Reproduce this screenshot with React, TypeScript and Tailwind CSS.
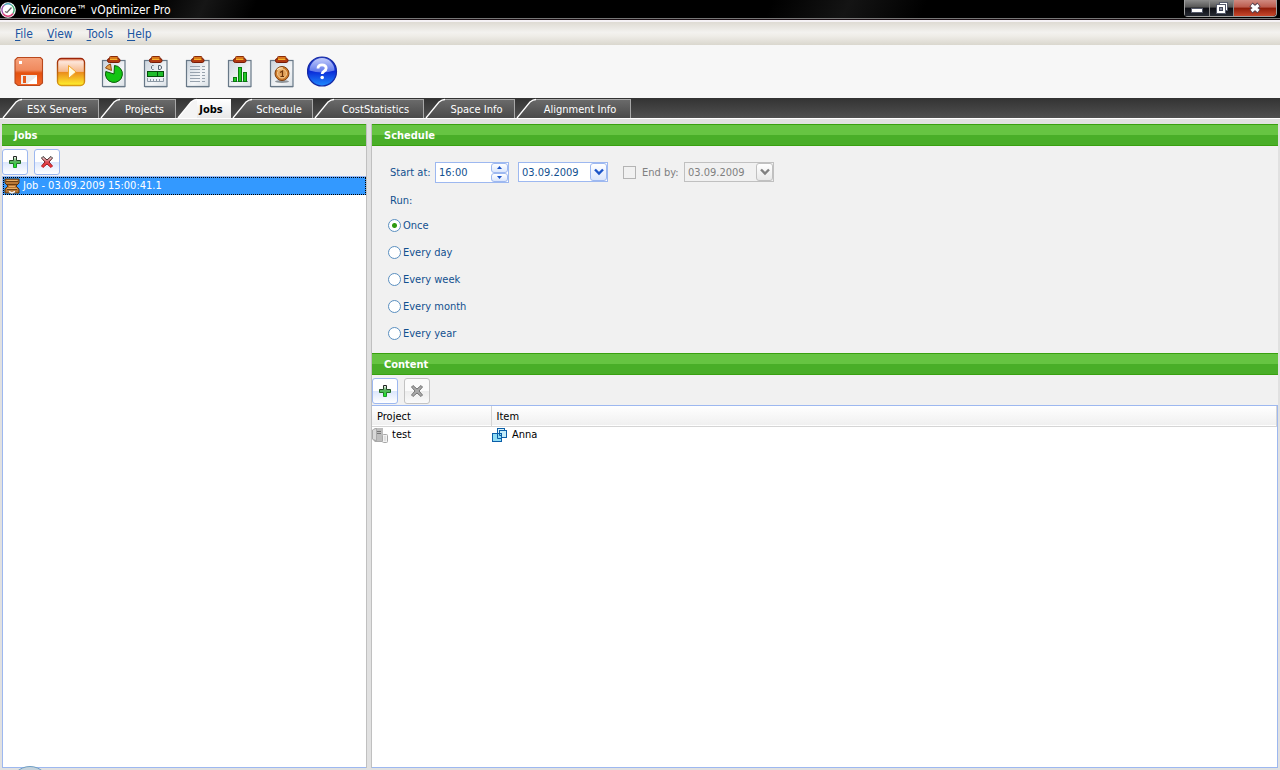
import { useState, type ReactNode } from 'react';
import { clsx } from 'clsx';

const menus = ['File', 'View', 'Tools', 'Help'];

const tabs = [
  { name: 'ESX Servers', width: 'w-[98px]' },
  { name: 'Projects', width: 'w-[77px]' },
  { name: 'Jobs', width: 'w-[55px]' },
  { name: 'Schedule', width: 'w-[82px]' },
  { name: 'CostStatistics', width: 'w-[111px]' },
  { name: 'Space Info', width: 'w-[91px]' },
  { name: 'Alignment Info', width: 'w-[116px]' },
];

const intervals = ['Once', 'Every day', 'Every week', 'Every month', 'Every year'];

function AppLogo() {
  return (
    <svg width="16" height="16" viewBox="0 0 16 16" aria-hidden="true">
      <circle cx="8" cy="8" r="7.8" fill="#fff" />
      <path d="M3 11.5A6 6 0 0 1 4.5 3" fill="none" stroke="#9a4fa8" strokeWidth="1.4" />
      <path d="M4.5 3A6 6 0 0 1 11.5 3" fill="none" stroke="#4aa3b5" strokeWidth="1.4" />
      <path d="M11.5 3A6 6 0 0 1 13 11.5" fill="none" stroke="#3fae74" strokeWidth="1.4" />
      <path d="M3 11.5A6 6 0 0 0 13 11.5" fill="none" stroke="#d8467c" strokeWidth="1.4" />
      <path d="M5 9.5 7 10.5 11.5 5.5" fill="none" stroke="#666" strokeWidth="1.3" />
    </svg>
  );
}

function SaveIcon() {
  return (
    <svg width="32" height="32" viewBox="0 0 32 32" aria-hidden="true">
      <defs>
        <linearGradient id="save" x1="0" y1="0" x2="0" y2="1">
          <stop offset="0" stopColor="#f6a27c" />
          <stop offset="0.45" stopColor="#f08a5e" />
          <stop offset="0.55" stopColor="#e4520f" />
          <stop offset="1" stopColor="#f2662a" />
        </linearGradient>
      </defs>
      <path d="M4.500 1.500H27.500L29.500 3.500V27L26.500 29.500H5L2 27V4Z" fill="url(#save)" stroke="#b9481c" strokeWidth="1.1" />
      <rect x="6" y="5" width="3" height="3" fill="#fff" />
      <rect x="8" y="19" width="16" height="9" fill="#eceae8" />
      <rect x="10" y="20" width="3" height="7" fill="#e65a1a" />
      <path d="M14 28 24 20V28Z" fill="#fff" />
    </svg>
  );
}

function RunIcon() {
  return (
    <svg width="32" height="32" viewBox="0 0 32 32" aria-hidden="true">
      <defs>
        <linearGradient id="run" x1="0" y1="0" x2="0" y2="1">
          <stop offset="0" stopColor="#e9825a" />
          <stop offset="0.12" stopColor="#fde6da" />
          <stop offset="0.48" stopColor="#f6b98c" />
          <stop offset="0.5" stopColor="#ea8a1c" />
          <stop offset="1" stopColor="#fff12c" />
        </linearGradient>
        <linearGradient id="runEdge" x1="0" y1="0" x2="0" y2="1">
          <stop offset="0" stopColor="#9c2408" />
          <stop offset="1" stopColor="#d99a12" />
        </linearGradient>
      </defs>
      <rect x="2.5" y="2.5" width="27" height="27" rx="4" fill="url(#run)" stroke="url(#runEdge)" strokeWidth="1.4" />
      <path d="M13.500 9.500 21 16 13.500 22.500Z" fill="#fffbe2" stroke="#f0a52a" strokeWidth="1" />
    </svg>
  );
}

function Clipboard({ children }: { children: ReactNode }) {
  return (
    <svg width="32" height="32" viewBox="0 0 32 32" aria-hidden="true">
      <defs>
        <linearGradient id="paper" x1="0" y1="0" x2="1" y2="1">
          <stop offset="0" stopColor="#cbd4dd" />
          <stop offset="0.6" stopColor="#f3f5f7" />
          <stop offset="1" stopColor="#dbe1e6" />
        </linearGradient>
      </defs>
      <rect x="5.5" y="4.5" width="22.5" height="26" fill="url(#paper)" stroke="#687887" strokeWidth="1.2" />
      <path d="M6 31.5H28" stroke="#c6ccd1" />
      <rect x="10.500" y="2.500" width="12.500" height="4" rx="1.800" fill="#b23a12" stroke="#771b07" />
      <rect x="12.500" y="0.500" width="8.500" height="3" rx="1" fill="#d9791a" stroke="#8a2a0a" />
      <path d="M13 3.500H20.500" stroke="#f5b32c" />
      {children}
    </svg>
  );
}

function PieReport() {
  return (
    <Clipboard>
      <path d="M17 18 17.500 9.500A8.500 8.500 0 1 1 8.800 15.500Z" fill="#14c514" stroke="#075c07" />
      <path d="M14.500 14.500 8.500 12A8 8 0 0 1 13.500 8Z" fill="#e5a149" stroke="#8f4d13" />
    </Clipboard>
  );
}

function DiskReport() {
  return (
    <Clipboard>
      <path d="M14.500 9.500H13.500L12.500 10.500V12.500L13.500 13.500H14.500M19.500 9.500V13.500H21L22.500 12.500V10.500L21 9.500Z" fill="none" stroke="#566473" />
      <rect x="8.500" y="15.500" width="16" height="5" fill="#1fbd2a" stroke="#064e0b" />
      <path d="M18.500 15V21" stroke="#064e0b" />
      <path d="M8.500 22V25.500H24.500V22M11.500 23V25M14.500 23V25M17.500 23V25M20.500 23V25" fill="none" stroke="#8b98a4" />
    </Clipboard>
  );
}

function ListReport() {
  return (
    <Clipboard>
      <path
        d="M9 10.500H19M9 13.500H19M9 16.500H19M9 19.500H19M9 22.500H19M9 25.500H19M21 10.500H24M21 13.500H24M21 16.500H24M21 19.500H24M21 22.500H24M21 25.500H24"
        stroke="#97a2ad"
      />
    </Clipboard>
  );
}

function ChartReport() {
  return (
    <Clipboard>
      <path d="M8 25.500H25" stroke="#7d8b98" />
      <rect x="10.500" y="21.500" width="3" height="4" fill="#20c925" stroke="#087a0d" />
      <rect x="15.500" y="11.500" width="3" height="14" fill="#20c925" stroke="#087a0d" />
      <rect x="20.500" y="16.500" width="3" height="9" fill="#20c925" stroke="#087a0d" />
    </Clipboard>
  );
}

function CostReport() {
  return (
    <Clipboard>
      <ellipse cx="17" cy="25.500" rx="7" ry="1.500" fill="#8e959b" />
      <circle cx="17" cy="17.500" r="7" fill="#cd7c2d" stroke="#7c3e0e" />
      <circle cx="17" cy="17.500" r="4.500" fill="#e3a25a" stroke="#f5cf96" />
      <path d="M15 16.500 17.500 15V20.500M15.500 20.500H19" fill="none" stroke="#6d3409" strokeWidth="1.200" />
      <path d="M12 14A6 6 0 0 1 18 12" fill="none" stroke="#ffe5b8" strokeWidth="1.200" />
    </Clipboard>
  );
}

function HelpIcon() {
  return (
    <svg width="32" height="32" viewBox="0 0 32 32" aria-hidden="true">
      <defs>
        <linearGradient id="help" x1="0" y1="0" x2="0" y2="1">
          <stop offset="0" stopColor="#2b46c8" />
          <stop offset="0.5" stopColor="#0a2bd8" />
          <stop offset="1" stopColor="#1f8cff" />
        </linearGradient>
        <linearGradient id="helpGloss" x1="0" y1="0" x2="0" y2="1">
          <stop offset="0" stopColor="#c3cdfb" />
          <stop offset="1" stopColor="#5a73ea" />
        </linearGradient>
      </defs>
      <circle cx="15" cy="15.500" r="14.500" fill="url(#help)" stroke="#1529a4" strokeWidth="1.200" />
      <path d="M2.500 14.500A12.500 12.500 0 0 1 27.500 14.500Q15 18.500 2.500 14.500Z" fill="url(#helpGloss)" />
      <path d="M11 12.500Q11 8.800 15 8.800T19.200 12Q19.200 14 17 15.200Q15.200 16.200 15.200 18" fill="none" stroke="#fff" strokeWidth="2.800" />
      <circle cx="15.200" cy="21.500" r="1.800" fill="#fff" />
    </svg>
  );
}

const tools = [
  { label: 'Save', icon: <SaveIcon /> },
  { label: 'Run', icon: <RunIcon /> },
  { label: 'Usage report', icon: <PieReport /> },
  { label: 'Disk report', icon: <DiskReport /> },
  { label: 'List report', icon: <ListReport /> },
  { label: 'Chart report', icon: <ChartReport /> },
  { label: 'Cost report', icon: <CostReport /> },
  { label: 'Help', icon: <HelpIcon /> },
];

function AddIcon() {
  return (
    <svg width="14" height="14" viewBox="0 0 14 14" aria-hidden="true">
      <defs>
        <linearGradient id="add" x1="0" y1="0" x2="0" y2="1">
          <stop offset="0" stopColor="#fff" />
          <stop offset="0.4" stopColor="#5fae66" />
          <stop offset="1" stopColor="#10f520" />
        </linearGradient>
        <linearGradient id="addEdge" x1="0" y1="0" x2="0" y2="1">
          <stop offset="0" stopColor="#222" />
          <stop offset="1" stopColor="#1f9c2a" />
        </linearGradient>
      </defs>
      <path d="M5.500 1.500H8.500V5.500H12.500V8.500H8.500V12.500H5.500V8.500H1.500V5.500H5.500Z" fill="url(#add)" stroke="url(#addEdge)" />
    </svg>
  );
}

function RemoveIcon({ disabled }: { disabled?: boolean }) {
  return (
    <svg width="14" height="14" viewBox="0 0 14 14" aria-hidden="true">
      <defs>
        <linearGradient id="remove" x1="0" y1="0" x2="0" y2="1">
          <stop offset="0" stopColor="#fff" />
          <stop offset="0.5" stopColor="#d94a55" />
          <stop offset="1" stopColor="#ff2a2a" />
        </linearGradient>
        <linearGradient id="removeEdge" x1="0" y1="0" x2="0" y2="1">
          <stop offset="0" stopColor="#222" />
          <stop offset="1" stopColor="#c01822" />
        </linearGradient>
      </defs>
      <path
        d="M3 1.500 7 5 11 1.500 12.500 3 9 7 12.500 11 11 12.500 7 9 3 12.500 1.500 11 5 7 1.500 3Z"
        fill={disabled ? '#a9a9a9' : 'url(#remove)'}
        stroke={disabled ? '#737373' : 'url(#removeEdge)'}
      />
    </svg>
  );
}

function JobIcon() {
  return (
    <svg width="16" height="16" viewBox="0 0 16 16" aria-hidden="true">
      <path d="M1 1H15V5L12 8 15 11V15H1V11L4 8 1 5Z" fill="#b87735" stroke="#5c3208" />
      <path d="M2 3.500H14M3 6.500H13M3 11.500H13" stroke="#6b3d10" />
      <path d="M2.500 2.500H13.500M5 8.500H11M3 10.500H13" stroke="#e6ac62" />
      <path d="M5 13.500 8 15 11 13.500" fill="none" stroke="#f4f4f4" strokeWidth="1.400" />
    </svg>
  );
}

function ServerIcon() {
  return (
    <svg width="16" height="16" viewBox="0 0 16 16" aria-hidden="true">
      <path d="M3 1H10V15H3L0 12V3Z" fill="#a9a9a9" />
      <path d="M1 3 4 2V13L1 12Z" fill="#d8d8d8" />
      <rect x="5" y="1" width="6" height="13" fill="#bdbdbd" />
      <path d="M5 4.500H9M5 6.500H9" stroke="#777" />
      <rect x="10.500" y="7.500" width="5" height="8" rx="1" fill="#f2f2f2" stroke="#a8a8a8" />
      <path d="M13 9V14" stroke="#cfcfcf" />
    </svg>
  );
}

function ItemIcon() {
  return (
    <svg width="16" height="16" viewBox="0 0 16 16" aria-hidden="true">
      <rect x="5.500" y="1.500" width="7" height="7" fill="#d8f3fb" stroke="#0b5ea8" />
      <rect x="7.500" y="3.500" width="7" height="7" fill="#c3ecf9" stroke="#0b5ea8" />
      <rect x="0.500" y="6.500" width="9" height="8" fill="#8fdcf4" stroke="#0b5ea8" />
      <path d="M5.500 6V11.500H9.500M7.500 6V8.500H9.500" fill="none" stroke="#0b5ea8" />
    </svg>
  );
}

function Chevron() {
  return (
    <svg width="10" height="8" viewBox="0 0 10 8" aria-hidden="true">
      <path d="M1 1.500 5 5.500 9 1.500" fill="none" stroke="currentColor" strokeWidth="2.400" />
    </svg>
  );
}

function Tab({ name, width, active, onSelect }: { name: string; width: string; active: boolean; onSelect: () => void }) {
  return (
    <button
      type="button"
      role="tab"
      aria-selected={active}
      onClick={onSelect}
      className={clsx('flex h-5 pr-px', width, active ? 'font-bold text-black' : 'text-white')}
    >
      <svg width="20" height="20" viewBox="0 0 20 20" className="shrink-0" aria-hidden="true">
        <defs>
          <linearGradient id="slope" x1="0" y1="0" x2="0" y2="1">
            <stop offset="0" stopColor="#6a6a6a" />
            <stop offset="1" stopColor="#4a4a4a" />
          </linearGradient>
        </defs>
        <path d="M1 20 14 4Q17 1 20 1V20Z" fill={active ? '#f4f4f4' : 'url(#slope)'} />
        <path d="M1 20 14 4Q17 1.500 20 1.500" fill="none" stroke="#fff" strokeWidth="1.300" />
      </svg>
      <span
        className={clsx(
          'mt-px h-[19px] flex-1 border-t pr-1.5 text-center leading-5 whitespace-nowrap',
          active
            ? 'border-white bg-linear-to-b from-white to-[#e8e8e8]'
            : 'border-r border-[#a8a8a8] bg-linear-to-b from-[#6a6a6a] to-[#4a4a4a]',
        )}
      >
        {name}
      </span>
    </button>
  );
}

function PanelTitle({ children }: { children: ReactNode }) {
  return (
    <h2 className="h-[22px] shrink-0 border-y border-[#39a010] bg-[linear-gradient(#66c442_50%,#49ae28_50%)] px-3 leading-[22px] font-bold text-white">
      {children}
    </h2>
  );
}

function ToolButton({ label, disabled, children }: { label: string; disabled?: boolean; children: ReactNode }) {
  return (
    <button
      type="button"
      aria-label={label}
      disabled={disabled}
      className={clsx(
        'grid size-[26px] place-items-center rounded-[3px] border',
        disabled
          ? 'border-[#c3c3c3] bg-[linear-gradient(#fbfbfb_50%,#ececec_50%,#fafafa)]'
          : 'border-[#9db8f0] bg-[linear-gradient(#fff_50%,#dbe6fc_50%,#fff)]',
      )}
    >
      {children}
    </button>
  );
}

function DateSelect({ id, label, disabled }: { id: string; label: string; disabled?: boolean }) {
  return (
    <div
      className={clsx(
        'relative flex h-5 w-[90px] border',
        disabled ? 'border-[#c0c0c0] text-[#808080]' : 'border-[#9db8f0] bg-white text-[#12508f]',
      )}
    >
      <select id={id} aria-label={label} disabled={disabled} className="w-full appearance-none pt-px pl-[3px] opacity-100 outline-none">
        <option>03.09.2009</option>
      </select>
      <span
        className={clsx(
          'pointer-events-none absolute inset-y-0 right-0 grid w-[17px] place-items-center rounded-[3px] border',
          disabled
            ? 'border-[#c0c0c0] bg-linear-to-b from-white to-[#e8e8e8]'
            : 'border-[#9db8f0] bg-linear-to-b from-white to-[#dbe6fc] text-[#1c55c8]',
        )}
      >
        <Chevron />
      </span>
    </div>
  );
}

function StepButton({ label, path }: { label: string; path: string }) {
  return (
    <button
      type="button"
      aria-label={label}
      className="grid flex-1 place-items-center rounded-[3px] border border-[#9db8f0] bg-linear-to-b from-white to-[#dbe6fc]"
    >
      <svg width="5" height="3" viewBox="0 0 5 3" aria-hidden="true">
        <path d={path} fill="#1c55c8" />
      </svg>
    </button>
  );
}

function TitleBar() {
  return (
    <header className="flex h-5 justify-between border-b border-[#1b1015] bg-black bg-[linear-gradient(115deg,#000_12%,#161616_16%,#000_20%,#000_60%,#141414_66%,#000_72%)] text-xs text-white shadow-[inset_0_-1px_#777]">
      <div className="flex items-center gap-[5px]">
        <AppLogo />
        <h1>Vizioncore™ vOptimizer Pro</h1>
      </div>
      <div className="mr-[3px] flex h-[17px] rounded-b-[4px] border border-t-0 border-[#a0a0a0]">
        <button type="button" aria-label="Minimize" className="grid w-[25px] place-items-center border-r border-[#8a8a8a] bg-[linear-gradient(#8b8b8b,#555_45%,#0b0c12_50%,#262a33)]">
          <svg width="12" height="14" viewBox="0 0 12 14" aria-hidden="true">
            <rect x="0.500" y="7.500" width="11" height="4" fill="#fff" stroke="#555a6b" />
          </svg>
        </button>
        <button type="button" aria-label="Restore" className="grid w-6 place-items-center border-r border-[#8a8a8a] bg-[linear-gradient(#8b8b8b,#555_45%,#0b0c12_50%,#262a33)]">
          <svg width="12" height="14" viewBox="0 0 12 14" aria-hidden="true">
            <rect x="3.500" y="1.500" width="8" height="8" fill="#fff" stroke="#555a6b" />
            <rect x="0.500" y="3.500" width="9" height="9" fill="#fff" stroke="#555a6b" />
            <rect x="3.500" y="6.500" width="3" height="3" fill="#8b8fa0" stroke="#454a5b" />
          </svg>
        </button>
        <button type="button" aria-label="Close" className="grid w-[42px] place-items-center rounded-br-[3px] bg-[linear-gradient(#d08a80,#bb5a4c_45%,#8e1b08_50%,#c8482c)]">
          <svg width="12" height="14" viewBox="0 0 12 14" aria-hidden="true">
            <path d="M2 3.500 10 10.500M10 3.500 2 10.500" stroke="#5a4350" strokeWidth="5" />
            <path d="M2.500 4 9.500 10M9.500 4 2.500 10" stroke="#fff" strokeWidth="3" />
          </svg>
        </button>
      </div>
    </header>
  );
}

function JobsPanel() {
  return (
    <section className="flex w-[365px] shrink-0 flex-col border-r border-[#c0c0c0] bg-[#f1f1f1]">
      <PanelTitle>Jobs</PanelTitle>
      <div className="flex gap-1.5 pt-[3px] pb-px">
        <ToolButton label="Add job"><AddIcon /></ToolButton>
        <ToolButton label="Remove job"><RemoveIcon /></ToolButton>
      </div>
      <ul className="flex-1 border border-r-0 border-[#9db8f0] bg-white">
        <li className="flex h-[18px] items-center gap-[3px] border border-dotted border-black bg-[#3399ff] leading-[18px] text-white">
          <JobIcon />
          Job - 03.09.2009 15:00:41.1
        </li>
      </ul>
    </section>
  );
}

function ScheduleForm() {
  const [run, setRun] = useState('Once');

  return (
    <form className="h-[207px] shrink-0 px-4 pt-4 text-[#12508f]">
      <div className="flex items-start">
        <label htmlFor="start-time" className="w-[47px] pl-0.5 leading-[22px] whitespace-nowrap">Start at:</label>
        <div className="flex h-[21px] w-[74px] border border-[#9db8f0] bg-white">
          <input id="start-time" type="text" defaultValue="16:00" className="w-0 flex-1 pl-[3px] outline-none" />
          <div className="flex w-[17px] flex-col">
            <StepButton label="Later" path="M0 3 2.500 0 5 3Z" />
            <StepButton label="Earlier" path="M0 0 2.500 3 5 0Z" />
          </div>
        </div>
        <div className="ml-[9px]">
          <DateSelect id="start-date" label="Start date" />
        </div>
        <div className="ml-[15px] flex h-[21px] items-center gap-1.5 text-[#808080]">
          <input id="use-end" type="checkbox" disabled className="size-[13px] appearance-none border border-[#b4b4b4] bg-[#f1f1f1]" />
          <label htmlFor="use-end" className="w-9 whitespace-nowrap">End by:</label>
        </div>
        <div className="ml-1.5">
          <DateSelect id="end-date" label="End date" disabled />
        </div>
      </div>
      <fieldset className="mt-[9px]">
        <legend className="pl-0.5 leading-4">Run:</legend>
        <div className="mt-[3px]">
          {intervals.map((name) => (
            <label key={name} className="flex h-[27px] w-fit items-center gap-0.5">
              <input
                type="radio"
                name="run"
                checked={run === name}
                onChange={() => setRun(name)}
                className="size-[13px] appearance-none rounded-full border border-[#5a8fc0] bg-white checked:bg-[radial-gradient(circle,#2f9a10_2px,#fff_3px)]"
              />
              {name}
            </label>
          ))}
        </div>
      </fieldset>
    </form>
  );
}

function ContentTable() {
  return (
    <div className="flex-1 border border-l-0 border-[#9db8f0] bg-white">
      <table className="w-full table-fixed border-collapse text-left text-black">
        <thead>
          <tr className="h-5 border-b border-[#d5d5d5] bg-linear-to-b from-white to-[#f0f0f0]">
            <th className="w-[119px] border-r border-[#d5d5d5] px-[5px] pt-0.5 font-normal">Project</th>
            <th className="border-r border-[#d5d5d5] px-[5px] pt-0.5 font-normal">Item</th>
          </tr>
        </thead>
        <tbody>
          <tr className="h-[18px]">
            <td>
              <span className="flex items-center gap-1"><ServerIcon />test</span>
            </td>
            <td>
              <span className="flex items-center gap-1 pl-px"><ItemIcon />Anna</span>
            </td>
          </tr>
        </tbody>
      </table>
    </div>
  );
}

export default function App() {
  const [active, setActive] = useState('Jobs');

  return (
    <div className="relative flex min-h-screen flex-col overflow-hidden bg-[#e1e1e1] font-['DejaVu_Sans_Condensed','DejaVu_Sans',sans-serif] text-[11px] leading-4">
      <TitleBar />
      <nav className="flex h-[25px] items-center gap-3.5 border-t-2 border-[#f6f3f6] bg-[linear-gradient(#dedbd3,#f3f2ef_45%,#efede8_60%,#dad7ce)] pl-[15px] text-xs text-[#1c55a0]">
        {menus.map((menu) => (
          <button key={menu} type="button">
            <span className="underline underline-offset-2">{menu[0]}</span>
            {menu.slice(1)}
          </button>
        ))}
      </nav>
      <div className="flex h-[53px] bg-[#f7f7f7] pt-[11px] pl-2">
        {tools.map(({ label, icon }) => (
          <button key={label} type="button" aria-label={label} className="flex h-8 w-[42px] justify-center">
            {icon}
          </button>
        ))}
      </div>
      <div role="tablist" className="flex h-[21px] border-b border-white bg-linear-to-b from-[#333] to-[#505050] pl-0.5">
        {tabs.map((tab) => (
          <Tab key={tab.name} {...tab} active={tab.name === active} onSelect={() => setActive(tab.name)} />
        ))}
      </div>
      <main className="flex flex-1 gap-1 px-0.5 pt-[5px] pb-0.5">
        <JobsPanel />
        <div className="flex min-w-0 flex-1 flex-col border-l border-[#c0c0c0] bg-[#f1f1f1]">
          <PanelTitle>Schedule</PanelTitle>
          <ScheduleForm />
          <PanelTitle>Content</PanelTitle>
          <div className="flex gap-1.5 pt-[3px] pb-px">
            <ToolButton label="Add item"><AddIcon /></ToolButton>
            <ToolButton label="Remove item" disabled><RemoveIcon disabled /></ToolButton>
          </div>
          <ContentTable />
        </div>
      </main>
      {/* top edge of the start orb peeking over the frame */}
      <div className="absolute -bottom-9 left-[10px] size-10 rounded-full border border-[#6f9fc4] bg-[#c5d3dc]" />
    </div>
  );
}
